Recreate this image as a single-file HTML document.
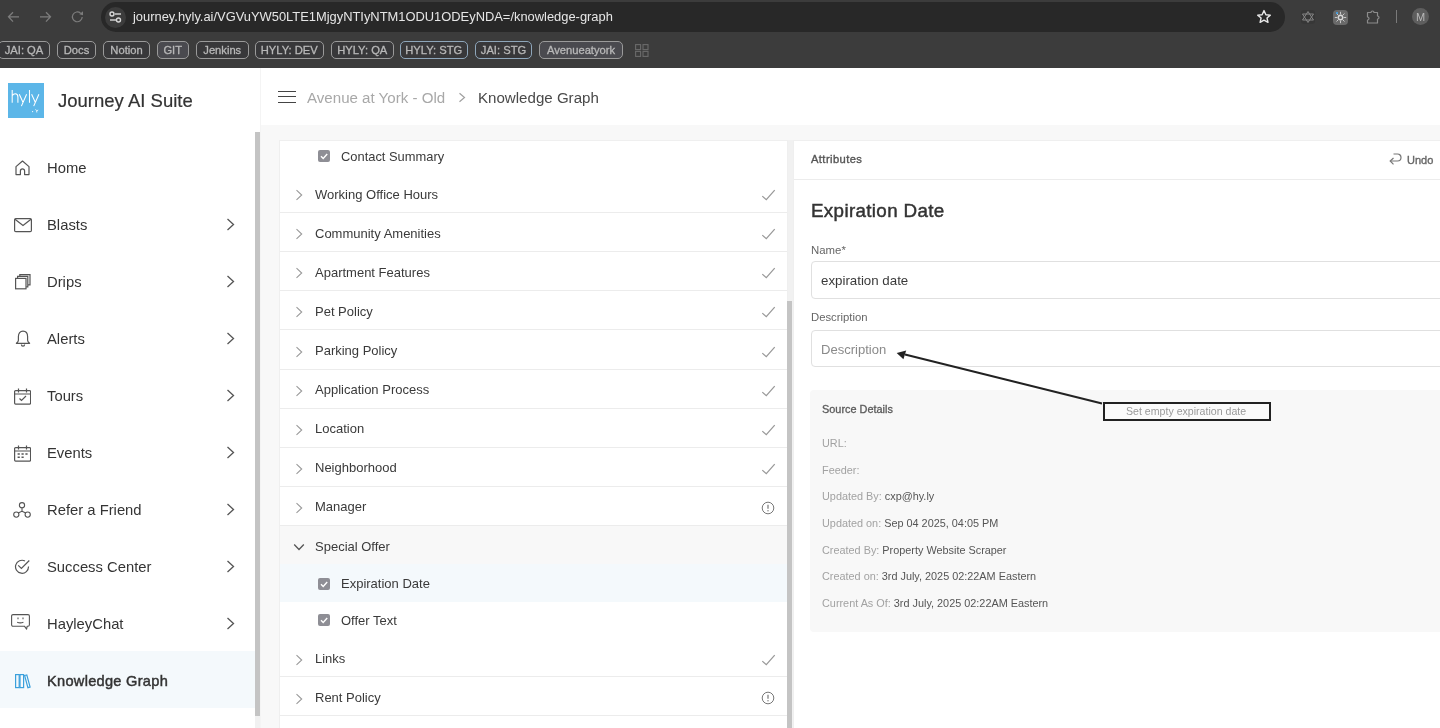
<!DOCTYPE html>
<html><head><meta charset="utf-8">
<style>
*{box-sizing:border-box;margin:0;padding:0}
html,body{width:1440px;height:728px;overflow:hidden;background:#f8f8f8;font-family:"Liberation Sans",sans-serif;position:relative}
.abs{position:absolute}
.t{position:absolute;white-space:nowrap;line-height:1;will-change:transform}
.pill{position:absolute;top:41px;height:18px;border:1px solid #9a9a9a;border-radius:5px;color:#b8b8b8;font-size:11.2px;font-weight:normal;-webkit-text-stroke:0.3px #b8b8b8;line-height:16px;text-align:center;will-change:transform}
</style></head><body>
<div class="abs" style="left:0;top:0;width:1440px;height:68px;background:#3c3c3c"></div>
<div class="abs" style="left:101px;top:2px;width:1184px;height:30px;border-radius:15px;background:#282828"></div>
<div class="abs" style="left:105px;top:6.5px;width:21px;height:21px;border-radius:50%;background:#3c3c3c"></div>
<svg class="abs" style="left:108px;top:10px;" width="15" height="14" viewBox="0 0 15 14" fill="none"><circle cx="4" cy="4" r="2" stroke="#d8d8d8" stroke-width="1.4"/><line x1="7" y1="4" x2="13" y2="4" stroke="#d8d8d8" stroke-width="1.4"/><circle cx="10.5" cy="10" r="2" stroke="#d8d8d8" stroke-width="1.4"/><line x1="2" y1="10" x2="8" y2="10" stroke="#d8d8d8" stroke-width="1.4"/></svg>
<svg class="abs" style="left:7px;top:10px;" width="14" height="14" viewBox="0 0 14 14" fill="none"><path d="M12 6.8H1.5M6 2.2L1.5 6.8 6 11.6" stroke="#7c7c7c" stroke-width="1.3"/></svg>
<svg class="abs" style="left:39px;top:10px;" width="14" height="14" viewBox="0 0 14 14" fill="none"><path d="M1 6.8h10.5M7 2.2l4.5 4.6L7 11.6" stroke="#7c7c7c" stroke-width="1.3"/></svg>
<svg class="abs" style="left:71px;top:10px;" width="14" height="14" viewBox="0 0 14 14" fill="none"><path d="M11.2 7A4.9 4.9 0 1 1 9.6 3.2" stroke="#7c7c7c" stroke-width="1.2"/><path d="M8.3 4.2L12 1.2v4z" fill="#7c7c7c"/></svg>
<div class="t" style="left:133.3px;top:11.28px;font-size:12.9px;color:#e6e6e6;font-weight:normal;">journey.hyly.ai/VGVuYW50LTE1MjgyNTIyNTM1ODU1ODEyNDA=/knowledge-graph</div>
<svg class="abs" style="left:1256px;top:9px;" width="16" height="16" viewBox="0 0 16 16" fill="none"><path d="M8 1.6l1.9 4.1 4.4.4-3.3 2.9 1 4.3L8 11.1l-3.9 2.2 1-4.3L1.7 6.1l4.4-.4z" stroke="#e8e8e8" stroke-width="1.4" stroke-linejoin="round"/></svg>
<div class="abs" style="left:1301px;top:10px;width:14px;height:14px;border-radius:3px;background:#373737"></div>
<svg class="abs" style="left:1301px;top:10px;" width="14" height="14" viewBox="0 0 14 14" fill="none"><path d="M7 1.5L12.5 10H1.5z" stroke="#858585" stroke-width="1"/><path d="M7 12.5L1.5 4h11z" stroke="#858585" stroke-width="1"/></svg>
<div class="abs" style="left:1333px;top:9.5px;width:15px;height:15px;border-radius:4px;background:#6a6a6a"></div>
<svg class="abs" style="left:1333px;top:9.5px;" width="15" height="15" viewBox="0 0 15 15" fill="none"><circle cx="7.5" cy="7.5" r="2.2" stroke="#d8d8d8" stroke-width="1.4"/><path d="M7.5 1.8v2.6M7.5 10.6v2.6M1.8 7.5h2.6M10.6 7.5h2.6M3.5 3.5l1.8 1.8M9.7 9.7l1.8 1.8M3.5 11.5l1.8-1.8M9.7 5.3l1.8-1.8" stroke="#c8c8c8" stroke-width="1"/></svg>
<div class="abs" style="left:1335.5px;top:11.5px;width:2px;height:2px;border-radius:50%;background:#3fa9f5"></div>
<svg class="abs" style="left:1365px;top:8px;" width="16" height="17" viewBox="0 0 16 17" fill="none"><path d="M2.5 4.5h3.5a1.5 1.5 0 0 1 3 0h3.5v3.5a1.5 1.5 0 0 1 0 3v4h-10v-3a1.5 1.5 0 0 0 0-3z" stroke="#8c8c8c" stroke-width="1.2" stroke-linejoin="round"/></svg>
<div class="abs" style="left:1395.5px;top:10px;width:1px;height:13px;background:#7a7a7a"></div>
<div class="abs" style="left:1412px;top:8px;width:17px;height:17px;border-radius:50%;background:#5e5e5e"></div>
<div class="t" style="left:1415.5px;top:11.69px;font-size:11px;color:#b8b8b8;font-weight:normal;">M</div>
<div class="pill" style="left:-2px;width:52px;background:#38383a;border-color:#9a9a9a">JAI: QA</div>
<div class="pill" style="left:57px;width:39px;background:#38383a;border-color:#9a9a9a">Docs</div>
<div class="pill" style="left:103px;width:47px;background:#38383a;border-color:#9a9a9a">Notion</div>
<div class="pill" style="left:157px;width:31.5px;background:#4a4a4f;border-color:#9a9a9a">GIT</div>
<div class="pill" style="left:195.5px;width:52.5px;background:#38383a;border-color:#9a9a9a">Jenkins</div>
<div class="pill" style="left:255px;width:68.5px;background:#38383a;border-color:#9a9a9a">HYLY: DEV</div>
<div class="pill" style="left:330.5px;width:62.5px;background:#38383a;border-color:#9a9a9a">HYLY: QA</div>
<div class="pill" style="left:400px;width:67.5px;background:#38383a;border-color:#8ea6ba">HYLY: STG</div>
<div class="pill" style="left:474.5px;width:57.0px;background:#38383a;border-color:#8ea6ba">JAI: STG</div>
<div class="pill" style="left:538.5px;width:84.0px;background:#4a4a4f;border-color:#9a9a9a">Avenueatyork</div>
<svg class="abs" style="left:635px;top:44px;" width="14" height="13" viewBox="0 0 14 13" fill="none"><rect x="0.6" y="0.6" width="5" height="5" stroke="#6a6a6a" stroke-width="1.1"/><rect x="8" y="0.6" width="5" height="5" stroke="#6a6a6a" stroke-width="1.1"/><rect x="0.6" y="7.4" width="5" height="5" stroke="#6a6a6a" stroke-width="1.1"/><rect x="8" y="7.4" width="5" height="5" stroke="#6a6a6a" stroke-width="1.1"/></svg>
<div class="abs" style="left:0;top:68px;width:260px;height:660px;background:#fff"></div>
<div class="abs" style="left:260px;top:68px;width:1px;height:660px;background:#f4f4f4"></div>
<div class="abs" style="left:255px;top:132px;width:5px;height:596px;background:#f1f1f1"></div>
<div class="abs" style="left:255px;top:132px;width:5px;height:584px;background:#c4c4c4"></div>
<div class="abs" style="left:8px;top:83px;width:36px;height:35px;background:#5cb6e8"></div>
<svg class="abs" style="left:8px;top:83px;" width="36" height="35" viewBox="0 0 36 35" fill="none"><path d="M4.2 7v12.7M4.2 12.6c0.8-1.2 1.9-1.8 3.1-1.8 1.8 0 2.6 1.1 2.6 3.1v5.8M11.3 11.3l3.9 8.4M18.6 11.3l-5.2 11.8M21.5 7v12.7M23.6 11.3l3.9 8.4M30.9 11.3l-5.2 11.8" stroke="#fff" stroke-width="1.05"/><circle cx="24.6" cy="28.6" r="0.6" fill="#fff"/><path d="M27.5 26.3l1.2 1.6M28.7 27.9l1.5-0.9M28.7 27.9l0.1 1.6" stroke="#fff" stroke-width="0.8"/></svg>
<div class="t" style="left:58px;top:91.74px;font-size:18.5px;color:#333333;font-weight:normal;-webkit-text-stroke:0.2px #333">Journey AI Suite</div>
<div class="abs" style="left:0;top:651px;width:255px;height:57px;background:#f4f9fc"></div>
<div class="t" style="left:46.5px;top:160.87px;font-size:14.8px;color:#343434;font-weight:normal;">Home</div>
<svg class="abs" style="left:14.8px;top:160px;" width="15" height="16" viewBox="0 0 15 16" fill="none"><path d="M1 14.6V6.6L7.5 1 14 6.6v8H9.6v-3.6a2.1 2.1 0 0 0-4.2 0v3.6z" stroke="#555" stroke-width="1.2" stroke-linejoin="round"/></svg>
<div class="t" style="left:46.5px;top:217.87px;font-size:14.8px;color:#343434;font-weight:normal;">Blasts</div>
<svg class="abs" style="left:13.7px;top:218px;" width="18" height="14.5" viewBox="0 0 18 14.5" fill="none"><rect x="0.6" y="0.6" width="16.8" height="13" rx="1.2" stroke="#555" stroke-width="1.2"/><path d="M1 1.2l8 6.3 8-6.3" stroke="#555" stroke-width="1.2"/></svg>
<svg class="abs" style="left:226px;top:218.4px;" width="9" height="13" viewBox="0 0 9 13" fill="none"><path d="M1.5 1l6 5.5-6 5.5" stroke="#555" stroke-width="1.3"/></svg>
<div class="t" style="left:46.5px;top:274.87px;font-size:14.8px;color:#343434;font-weight:normal;">Drips</div>
<svg class="abs" style="left:14.5px;top:274px;" width="16" height="16" viewBox="0 0 16 16" fill="none"><rect x="0.6" y="4.4" width="10.4" height="10.4" stroke="#555" stroke-width="1.2"/><path d="M2.6 4.2V2.4h10.2v10.4h-1.6M4.8 2.2V0.6H15v10.2h-2" stroke="#555" stroke-width="1.2"/></svg>
<svg class="abs" style="left:226px;top:275.4px;" width="9" height="13" viewBox="0 0 9 13" fill="none"><path d="M1.5 1l6 5.5-6 5.5" stroke="#555" stroke-width="1.3"/></svg>
<div class="t" style="left:46.5px;top:331.87px;font-size:14.8px;color:#343434;font-weight:normal;">Alerts</div>
<svg class="abs" style="left:14.5px;top:330px;" width="16" height="17" viewBox="0 0 16 17" fill="none"><path d="M8 1.2C5.1 1.2 3.4 3.5 3.4 6.6v3.6c0 1.3-1 2.3-2 3.1h13.2c-1-.8-2-1.8-2-3.1V6.6C12.6 3.5 10.9 1.2 8 1.2z" stroke="#555" stroke-width="1.2" stroke-linejoin="round"/><path d="M6.4 14.6a1.6 1.6 0 0 0 3.2 0" stroke="#555" stroke-width="1.2"/></svg>
<svg class="abs" style="left:226px;top:332.4px;" width="9" height="13" viewBox="0 0 9 13" fill="none"><path d="M1.5 1l6 5.5-6 5.5" stroke="#555" stroke-width="1.3"/></svg>
<div class="t" style="left:46.5px;top:388.87px;font-size:14.8px;color:#343434;font-weight:normal;">Tours</div>
<svg class="abs" style="left:13.5px;top:388px;" width="17.2" height="17" viewBox="0 0 17.2 17" fill="none"><rect x="0.6" y="2.6" width="16" height="13.5" rx="1" stroke="#555" stroke-width="1.2"/><path d="M0.8 6h15.8M4.5 0.5v4M12.5 0.5v4M5.5 10.5l2 2 4.5-4.5" stroke="#555" stroke-width="1.2"/></svg>
<svg class="abs" style="left:226px;top:389.4px;" width="9" height="13" viewBox="0 0 9 13" fill="none"><path d="M1.5 1l6 5.5-6 5.5" stroke="#555" stroke-width="1.3"/></svg>
<div class="t" style="left:46.5px;top:445.87px;font-size:14.8px;color:#343434;font-weight:normal;">Events</div>
<svg class="abs" style="left:13.5px;top:445px;" width="17.2" height="17" viewBox="0 0 17.2 17" fill="none"><rect x="0.6" y="2.6" width="16" height="13.5" rx="1" stroke="#555" stroke-width="1.2"/><path d="M0.8 6h15.8M4.5 0.5v4M12.5 0.5v4" stroke="#555" stroke-width="1.2"/><path d="M3.6 9h2.2M7.5 9h2.2M11.4 9h2.2M3.6 12.2h2.2M7.5 12.2h2.2" stroke="#555" stroke-width="1.5"/></svg>
<svg class="abs" style="left:226px;top:446.4px;" width="9" height="13" viewBox="0 0 9 13" fill="none"><path d="M1.5 1l6 5.5-6 5.5" stroke="#555" stroke-width="1.3"/></svg>
<div class="t" style="left:46.5px;top:502.87px;font-size:14.8px;color:#343434;font-weight:normal;">Refer a Friend</div>
<svg class="abs" style="left:13px;top:502px;" width="18" height="16" viewBox="0 0 18 16" fill="none"><circle cx="9" cy="3.2" r="2.6" stroke="#555" stroke-width="1.1"/><circle cx="3.3" cy="12.6" r="2.6" stroke="#555" stroke-width="1.1"/><circle cx="14.7" cy="12.6" r="2.6" stroke="#555" stroke-width="1.1"/><path d="M9 5.8v3.4L5.2 10.9M9 9.2l3.8 1.7" stroke="#555" stroke-width="1.1"/></svg>
<svg class="abs" style="left:226px;top:503.4px;" width="9" height="13" viewBox="0 0 9 13" fill="none"><path d="M1.5 1l6 5.5-6 5.5" stroke="#555" stroke-width="1.3"/></svg>
<div class="t" style="left:46.5px;top:559.87px;font-size:14.8px;color:#343434;font-weight:normal;">Success Center</div>
<svg class="abs" style="left:13.8px;top:558.5px;" width="16" height="16" viewBox="0 0 16 16" fill="none"><path d="M14.5 7.5A6.5 6.5 0 1 1 11 2" stroke="#555" stroke-width="1.2"/><path d="M4.2 6.3l3.2 3.2 7.9-8" stroke="#555" stroke-width="1.2"/></svg>
<svg class="abs" style="left:226px;top:560.4px;" width="9" height="13" viewBox="0 0 9 13" fill="none"><path d="M1.5 1l6 5.5-6 5.5" stroke="#555" stroke-width="1.3"/></svg>
<div class="t" style="left:46.5px;top:616.87px;font-size:14.8px;color:#343434;font-weight:normal;">HayleyChat</div>
<svg class="abs" style="left:11.2px;top:613.5px;" width="19" height="16" viewBox="0 0 19 16" fill="none"><path d="M2 0.6h15a1.4 1.4 0 0 1 1.4 1.4v8.8a1.4 1.4 0 0 1-1.4 1.4h-0.8l-0.6 3-2.2-3H2a1.4 1.4 0 0 1-1.4-1.4V2A1.4 1.4 0 0 1 2 0.6z" stroke="#555" stroke-width="1.1" stroke-linejoin="round"/><path d="M7 3.4v1.8M12 3.4v1.8M6.2 8.2c2 0.9 4.2 0.9 6.2 0" stroke="#555" stroke-width="1.1"/></svg>
<svg class="abs" style="left:226px;top:617.4px;" width="9" height="13" viewBox="0 0 9 13" fill="none"><path d="M1.5 1l6 5.5-6 5.5" stroke="#555" stroke-width="1.3"/></svg>
<div class="t" style="left:46.5px;top:674.04px;font-size:14.6px;color:#333333;font-weight:normal;-webkit-text-stroke:0.45px #333;letter-spacing:0.28px">Knowledge Graph</div>
<svg class="abs" style="left:14.5px;top:674px;" width="16" height="15" viewBox="0 0 16 15" fill="none"><rect x="0.6" y="0.6" width="3.6" height="13" stroke="#3aa0dc" stroke-width="1.2"/><rect x="5" y="0.6" width="3.6" height="13" stroke="#3aa0dc" stroke-width="1.2"/><path d="M9.6 1.5l2.2-.6 3.3 12.2-2.2.6z" stroke="#3aa0dc" stroke-width="1.2"/></svg>
<div class="abs" style="left:261px;top:68px;width:1179px;height:57px;background:#fff"></div>
<div class="abs" style="left:278px;top:90.9px;width:18px;height:1.2px;background:#444"></div>
<div class="abs" style="left:278px;top:96.3px;width:18px;height:1.2px;background:#444"></div>
<div class="abs" style="left:278px;top:101.7px;width:18px;height:1.2px;background:#444"></div>
<div class="t" style="left:306.5px;top:89.52px;font-size:15.1px;color:#a8a8a8;font-weight:normal;">Avenue at York - Old</div>
<svg class="abs" style="left:458px;top:92px;" width="9" height="11" viewBox="0 0 9 11" fill="none"><path d="M1.5 1.2l5 4.3-5 4.3" stroke="#a0a0a0" stroke-width="1.2"/></svg>
<div class="t" style="left:478px;top:89.52px;font-size:15.1px;color:#4a4a4a;font-weight:normal;">Knowledge Graph</div>
<div class="abs" style="left:278.5px;top:139.5px;width:509.5px;height:600px;background:#fff;border:1px solid #efefef;border-bottom:none"></div>
<div class="abs" style="left:788px;top:140px;width:5px;height:588px;background:#f1f1f1"></div>
<div class="abs" style="left:787.2px;top:300.5px;width:5px;height:428px;background:#c4c4c4"></div>
<svg class="abs" style="left:318px;top:150.2px;" width="12" height="12" viewBox="0 0 12 12" fill="none"><rect x="0" y="0" width="12" height="12" rx="2" fill="#8e8e95"/><path d="M3 6.2l2.2 2.2 4-4.4" stroke="#fff" stroke-width="1.4"/></svg>
<div class="t" style="left:340.5px;top:150.98px;font-size:12.9px;color:#3a3a3a;font-weight:normal;">Contact Summary</div>
<svg class="abs" style="left:295px;top:189.2px;" width="9" height="12" viewBox="0 0 9 12" fill="none"><path d="M1.5 1.2l5.2 4.8-5.2 4.8" stroke="#9a9a9a" stroke-width="1.1"/></svg>
<div class="t" style="left:314.5px;top:187.70px;font-size:13px;color:#3a3a3a;font-weight:normal;">Working Office Hours</div>
<svg class="abs" style="left:761px;top:189.2px;" width="16" height="12" viewBox="0 0 16 12" fill="none"><path d="M1.3 7.1L5.3 10.6 13.7 1.1" stroke="#999" stroke-width="1.25"/></svg>
<div class="abs" style="left:280px;top:212.20px;width:507px;height:1px;background:#ececec"></div>
<svg class="abs" style="left:295px;top:228.29px;" width="9" height="12" viewBox="0 0 9 12" fill="none"><path d="M1.5 1.2l5.2 4.8-5.2 4.8" stroke="#9a9a9a" stroke-width="1.1"/></svg>
<div class="t" style="left:314.5px;top:226.79px;font-size:13px;color:#3a3a3a;font-weight:normal;">Community Amenities</div>
<svg class="abs" style="left:761px;top:228.29px;" width="16" height="12" viewBox="0 0 16 12" fill="none"><path d="M1.3 7.1L5.3 10.6 13.7 1.1" stroke="#999" stroke-width="1.25"/></svg>
<div class="abs" style="left:280px;top:251.29px;width:507px;height:1px;background:#ececec"></div>
<svg class="abs" style="left:295px;top:267.38px;" width="9" height="12" viewBox="0 0 9 12" fill="none"><path d="M1.5 1.2l5.2 4.8-5.2 4.8" stroke="#9a9a9a" stroke-width="1.1"/></svg>
<div class="t" style="left:314.5px;top:265.88px;font-size:13px;color:#3a3a3a;font-weight:normal;">Apartment Features</div>
<svg class="abs" style="left:761px;top:267.38px;" width="16" height="12" viewBox="0 0 16 12" fill="none"><path d="M1.3 7.1L5.3 10.6 13.7 1.1" stroke="#999" stroke-width="1.25"/></svg>
<div class="abs" style="left:280px;top:290.38px;width:507px;height:1px;background:#ececec"></div>
<svg class="abs" style="left:295px;top:306.47px;" width="9" height="12" viewBox="0 0 9 12" fill="none"><path d="M1.5 1.2l5.2 4.8-5.2 4.8" stroke="#9a9a9a" stroke-width="1.1"/></svg>
<div class="t" style="left:314.5px;top:304.97px;font-size:13px;color:#3a3a3a;font-weight:normal;">Pet Policy</div>
<svg class="abs" style="left:761px;top:306.47px;" width="16" height="12" viewBox="0 0 16 12" fill="none"><path d="M1.3 7.1L5.3 10.6 13.7 1.1" stroke="#999" stroke-width="1.25"/></svg>
<div class="abs" style="left:280px;top:329.47px;width:507px;height:1px;background:#ececec"></div>
<svg class="abs" style="left:295px;top:345.56px;" width="9" height="12" viewBox="0 0 9 12" fill="none"><path d="M1.5 1.2l5.2 4.8-5.2 4.8" stroke="#9a9a9a" stroke-width="1.1"/></svg>
<div class="t" style="left:314.5px;top:344.06px;font-size:13px;color:#3a3a3a;font-weight:normal;">Parking Policy</div>
<svg class="abs" style="left:761px;top:345.56px;" width="16" height="12" viewBox="0 0 16 12" fill="none"><path d="M1.3 7.1L5.3 10.6 13.7 1.1" stroke="#999" stroke-width="1.25"/></svg>
<div class="abs" style="left:280px;top:368.56px;width:507px;height:1px;background:#ececec"></div>
<svg class="abs" style="left:295px;top:384.65px;" width="9" height="12" viewBox="0 0 9 12" fill="none"><path d="M1.5 1.2l5.2 4.8-5.2 4.8" stroke="#9a9a9a" stroke-width="1.1"/></svg>
<div class="t" style="left:314.5px;top:383.15px;font-size:13px;color:#3a3a3a;font-weight:normal;">Application Process</div>
<svg class="abs" style="left:761px;top:384.65px;" width="16" height="12" viewBox="0 0 16 12" fill="none"><path d="M1.3 7.1L5.3 10.6 13.7 1.1" stroke="#999" stroke-width="1.25"/></svg>
<div class="abs" style="left:280px;top:407.65px;width:507px;height:1px;background:#ececec"></div>
<svg class="abs" style="left:295px;top:423.74px;" width="9" height="12" viewBox="0 0 9 12" fill="none"><path d="M1.5 1.2l5.2 4.8-5.2 4.8" stroke="#9a9a9a" stroke-width="1.1"/></svg>
<div class="t" style="left:314.5px;top:422.24px;font-size:13px;color:#3a3a3a;font-weight:normal;">Location</div>
<svg class="abs" style="left:761px;top:423.74px;" width="16" height="12" viewBox="0 0 16 12" fill="none"><path d="M1.3 7.1L5.3 10.6 13.7 1.1" stroke="#999" stroke-width="1.25"/></svg>
<div class="abs" style="left:280px;top:446.74px;width:507px;height:1px;background:#ececec"></div>
<svg class="abs" style="left:295px;top:462.83px;" width="9" height="12" viewBox="0 0 9 12" fill="none"><path d="M1.5 1.2l5.2 4.8-5.2 4.8" stroke="#9a9a9a" stroke-width="1.1"/></svg>
<div class="t" style="left:314.5px;top:461.33px;font-size:13px;color:#3a3a3a;font-weight:normal;">Neighborhood</div>
<svg class="abs" style="left:761px;top:462.83px;" width="16" height="12" viewBox="0 0 16 12" fill="none"><path d="M1.3 7.1L5.3 10.6 13.7 1.1" stroke="#999" stroke-width="1.25"/></svg>
<div class="abs" style="left:280px;top:485.83px;width:507px;height:1px;background:#ececec"></div>
<svg class="abs" style="left:295px;top:501.9200000000001px;" width="9" height="12" viewBox="0 0 9 12" fill="none"><path d="M1.5 1.2l5.2 4.8-5.2 4.8" stroke="#9a9a9a" stroke-width="1.1"/></svg>
<div class="t" style="left:314.5px;top:500.42px;font-size:13px;color:#3a3a3a;font-weight:normal;">Manager</div>
<svg class="abs" style="left:761px;top:500.9200000000001px;" width="14" height="14" viewBox="0 0 14 14" fill="none"><circle cx="7" cy="7" r="5.8" stroke="#777" stroke-width="1"/><path d="M7 3.8v4" stroke="#777" stroke-width="1.2"/><circle cx="7" cy="9.8" r="0.7" fill="#777"/></svg>
<div class="abs" style="left:280px;top:524.92px;width:507px;height:1px;background:#ececec"></div>
<div class="abs" style="left:280px;top:525.6px;width:507px;height:38.1px;background:#f8f8f8"></div>
<svg class="abs" style="left:293px;top:543px;" width="12" height="9" viewBox="0 0 12 9" fill="none"><path d="M1.2 1.5l4.8 5 4.8-5" stroke="#555" stroke-width="1.3"/></svg>
<div class="t" style="left:314.5px;top:539.80px;font-size:13px;color:#3a3a3a;font-weight:normal;">Special Offer</div>
<div class="abs" style="left:280px;top:563.7px;width:507px;height:38.7px;background:#f4f9fc"></div>
<svg class="abs" style="left:318px;top:577.5px;" width="12" height="12" viewBox="0 0 12 12" fill="none"><rect x="0" y="0" width="12" height="12" rx="2" fill="#8e8e95"/><path d="M3 6.2l2.2 2.2 4-4.4" stroke="#fff" stroke-width="1.4"/></svg>
<div class="t" style="left:340.5px;top:577.40px;font-size:13px;color:#3a3a3a;font-weight:normal;">Expiration Date</div>
<svg class="abs" style="left:318px;top:614px;" width="12" height="12" viewBox="0 0 12 12" fill="none"><rect x="0" y="0" width="12" height="12" rx="2" fill="#8e8e95"/><path d="M3 6.2l2.2 2.2 4-4.4" stroke="#fff" stroke-width="1.4"/></svg>
<div class="t" style="left:340.5px;top:613.90px;font-size:13px;color:#3a3a3a;font-weight:normal;">Offer Text</div>
<svg class="abs" style="left:295px;top:653.5px;" width="9" height="12" viewBox="0 0 9 12" fill="none"><path d="M1.5 1.2l5.2 4.8-5.2 4.8" stroke="#9a9a9a" stroke-width="1.1"/></svg>
<div class="t" style="left:314.5px;top:651.80px;font-size:13px;color:#3a3a3a;font-weight:normal;">Links</div>
<svg class="abs" style="left:761px;top:653.5px;" width="16" height="12" viewBox="0 0 16 12" fill="none"><path d="M1.3 7.1L5.3 10.6 13.7 1.1" stroke="#999" stroke-width="1.25"/></svg>
<div class="abs" style="left:280px;top:676px;width:507px;height:1px;background:#ececec"></div>
<svg class="abs" style="left:295px;top:692.5px;" width="9" height="12" viewBox="0 0 9 12" fill="none"><path d="M1.5 1.2l5.2 4.8-5.2 4.8" stroke="#9a9a9a" stroke-width="1.1"/></svg>
<div class="t" style="left:314.5px;top:691.00px;font-size:13px;color:#3a3a3a;font-weight:normal;">Rent Policy</div>
<svg class="abs" style="left:761px;top:691px;" width="14" height="14" viewBox="0 0 14 14" fill="none"><circle cx="7" cy="7" r="5.8" stroke="#777" stroke-width="1"/><path d="M7 3.8v4" stroke="#777" stroke-width="1.2"/><circle cx="7" cy="9.8" r="0.7" fill="#777"/></svg>
<div class="abs" style="left:280px;top:715px;width:507px;height:1px;background:#ececec"></div>
<div class="abs" style="left:793px;top:139.5px;width:700px;height:600px;background:#fff;border:1px solid #efefef"></div>
<div class="t" style="left:810.8px;top:154.22px;font-size:11.2px;color:#555555;font-weight:normal;-webkit-text-stroke:0.35px #555;letter-spacing:0.4px">Attributes</div>
<svg class="abs" style="left:1388px;top:153.2px;" width="14" height="13" viewBox="0 0 14 13" fill="none"><path d="M3 8h6.5a3.5 3.5 0 0 0 0-7H5.5" stroke="#777" stroke-width="1.2"/><path d="M5.5 5L2.2 8l3.3 3.3" stroke="#777" stroke-width="1.2"/></svg>
<div class="t" style="left:1406.5px;top:155.09px;font-size:11px;color:#666666;font-weight:normal;-webkit-text-stroke:0.35px #666">Undo</div>
<div class="abs" style="left:794px;top:178.5px;width:646px;height:1px;background:#ececec"></div>
<div class="t" style="left:810.5px;top:202.49px;font-size:18.8px;color:#333333;font-weight:normal;-webkit-text-stroke:0.45px #333;letter-spacing:0.34px">Expiration Date</div>
<div class="t" style="left:810.8px;top:244.85px;font-size:11.4px;color:#666666;font-weight:normal;">Name*</div>
<div class="abs" style="left:810.7px;top:261.1px;width:700px;height:38.2px;border:1px solid #e0e0e0;border-radius:4px;background:#fff"></div>
<div class="t" style="left:820.8px;top:274.24px;font-size:13.3px;color:#3a3a3a;font-weight:normal;">expiration date</div>
<div class="t" style="left:810.8px;top:312.33px;font-size:11.3px;color:#666666;font-weight:normal;">Description</div>
<div class="abs" style="left:810.7px;top:330px;width:700px;height:37px;border:1px solid #e0e0e0;border-radius:4px;background:#fff"></div>
<div class="t" style="left:820.8px;top:343.24px;font-size:13.06px;color:#8a8a8a;font-weight:normal;">Description</div>
<div class="abs" style="left:810.2px;top:390px;width:700px;height:241.5px;border-radius:4px;background:#f8f8f8"></div>
<div class="t" style="left:821.7px;top:403.67px;font-size:10.9px;color:#5a5a5a;font-weight:normal;-webkit-text-stroke:0.3px #5a5a5a">Source Details</div>
<div class="t" style="left:821.7px;top:437.91px;font-size:10.86px;color:#a2a2a2;font-weight:normal;">URL:<span style="color:#555"></span></div>
<div class="t" style="left:821.7px;top:464.56px;font-size:10.86px;color:#a2a2a2;font-weight:normal;">Feeder:<span style="color:#555"></span></div>
<div class="t" style="left:821.7px;top:491.21px;font-size:10.86px;color:#a2a2a2;font-weight:normal;">Updated By: <span style="color:#555">cxp@hy.ly</span></div>
<div class="t" style="left:821.7px;top:517.86px;font-size:10.86px;color:#a2a2a2;font-weight:normal;">Updated on: <span style="color:#555">Sep 04 2025, 04:05 PM</span></div>
<div class="t" style="left:821.7px;top:544.51px;font-size:10.86px;color:#a2a2a2;font-weight:normal;">Created By: <span style="color:#555">Property Website Scraper</span></div>
<div class="t" style="left:821.7px;top:571.16px;font-size:10.86px;color:#a2a2a2;font-weight:normal;">Created on: <span style="color:#555">3rd July, 2025 02:22AM Eastern</span></div>
<div class="t" style="left:821.7px;top:597.81px;font-size:10.86px;color:#a2a2a2;font-weight:normal;">Current As Of: <span style="color:#555">3rd July, 2025 02:22AM Eastern</span></div>
<svg class="abs" style="left:890px;top:345px;" width="220" height="62" viewBox="0 0 220 62" fill="none"><path d="M1102 403.5L905 354.5" transform="translate(-890 -345)" stroke="#222" stroke-width="2"/><path d="M896.7 352.9L906.2 350.4 903.4 359.2z" transform="translate(-890 -345)" fill="#222"/></svg>
<div class="abs" style="left:1102.5px;top:402px;width:168px;height:19px;border:2px solid #222;background:#fbfbfb"></div>
<div class="t" style="left:1126px;top:406.33px;font-size:10.6px;color:#9a9a9a;font-weight:normal;">Set empty expiration date</div>
</body></html>
